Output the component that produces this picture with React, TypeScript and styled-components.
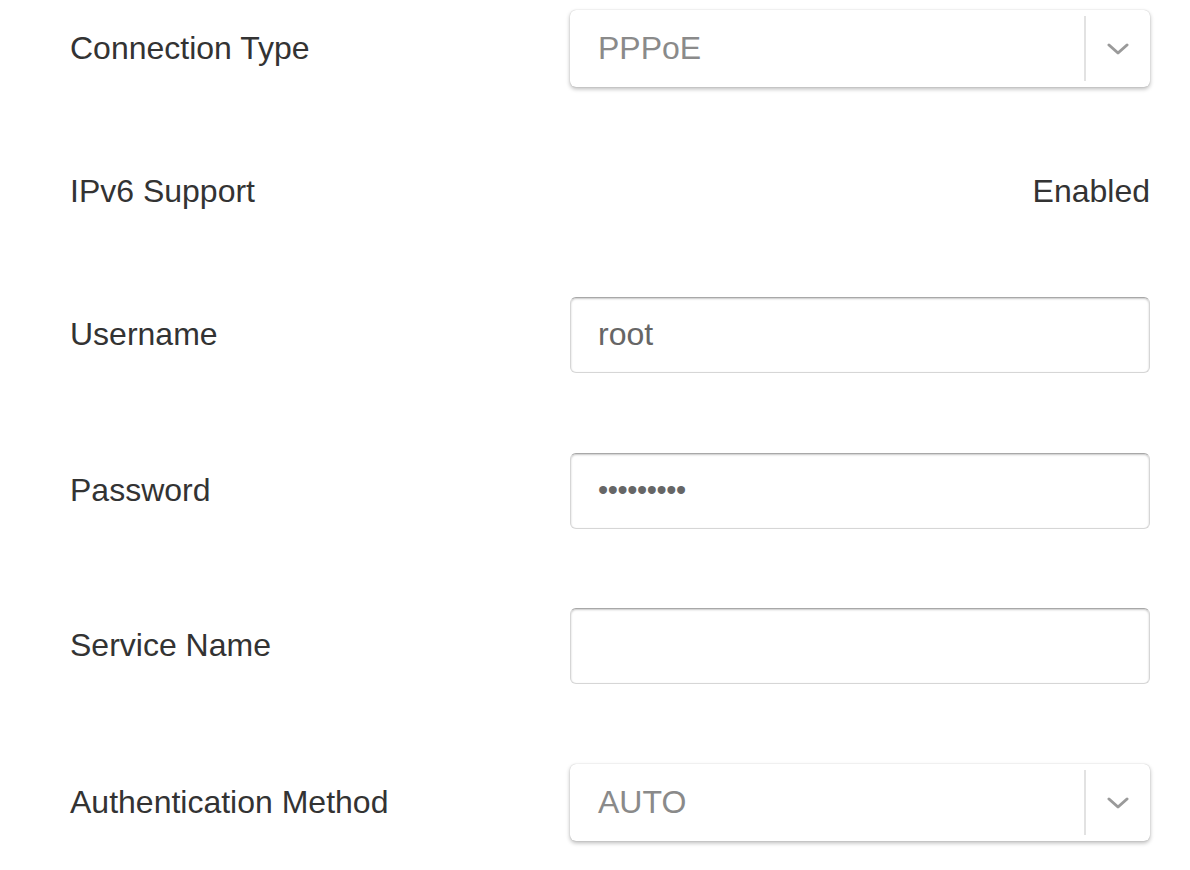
import React from "react";
import styled, { createGlobalStyle } from "styled-components";

const GlobalStyle = createGlobalStyle`
  body {
    margin: 0;
    background: #ffffff;
    font-family: "Liberation Sans", Arial, Helvetica, sans-serif;
  }
`;

const Form = styled.div`
  display: flex;
  flex-direction: column;
  padding: 0 40px 28px 70px;
  width: 1190px;
  box-sizing: border-box;
`;

const Row = styled.div<{ $top: number }>`
  display: flex;
  align-items: center;
  justify-content: space-between;
  height: 77px;
  margin-top: ${(p) => p.$top}px;
`;

const Label = styled.label`
  font-size: 32px;
  color: #333333;
`;

const Control = styled.div`
  width: 580px;
  display: flex;
  justify-content: flex-end;
`;

const StaticValue = styled.span`
  font-size: 32px;
  color: #333333;
`;

const SelectBox = styled.div`
  display: flex;
  align-items: center;
  width: 100%;
  height: 77px;
  box-sizing: border-box;
  background: #ffffff;
  border-radius: 6px;
  box-shadow: 0 2px 4px rgba(0, 0, 0, 0.28), 0 0 1px rgba(0, 0, 0, 0.25);
`;

const SelectValue = styled.span`
  flex: 1;
  padding-left: 28px;
  font-size: 32px;
  color: #8a8a8a;
`;

const Indicator = styled.div`
  display: flex;
  align-items: center;
  justify-content: center;
  width: 66px;
  height: 65px;
  border-left: 2px solid #e2e2e2;
  box-sizing: border-box;
`;

const TextInput = styled.input`
  width: 100%;
  height: 76px;
  box-sizing: border-box;
  padding: 0 27px;
  border: 1px solid #d6d6d6;
  border-top-color: #a8a8a8;
  border-radius: 6px;
  box-shadow: inset 0 1px 2px rgba(0, 0, 0, 0.22);
  font-family: "Liberation Sans", Arial, Helvetica, sans-serif;
  font-size: 32px;
  color: #666666;
  background: #ffffff;
  outline: none;
`;

const PasswordInput = styled(TextInput)`
  font-size: 29px;
  letter-spacing: -0.4px;
`;

const Chevron = () => (
  <svg width="22" height="12" viewBox="0 0 22 12">
    <polyline
      points="2,2 11,10 20,2"
      fill="none"
      stroke="#9a9a9a"
      strokeWidth="3"
      strokeLinecap="round"
      strokeLinejoin="round"
    />
  </svg>
);

const Select: React.FC<{ value: string }> = ({ value }) => (
  <SelectBox>
    <SelectValue>{value}</SelectValue>
    <Indicator>
      <Chevron />
    </Indicator>
  </SelectBox>
);

const App: React.FC = () => {
  return (
    <>
      <GlobalStyle />
      <Form>
        <Row $top={10}>
          <Label>Connection Type</Label>
          <Control>
            <Select value="PPPoE" />
          </Control>
        </Row>
        <Row $top={66}>
          <Label>IPv6 Support</Label>
          <StaticValue>Enabled</StaticValue>
        </Row>
        <Row $top={66}>
          <Label>Username</Label>
          <Control>
            <TextInput type="text" defaultValue="root" readOnly />
          </Control>
        </Row>
        <Row $top={79}>
          <Label>Password</Label>
          <Control>
            <PasswordInput type="password" defaultValue="123456789" readOnly />
          </Control>
        </Row>
        <Row $top={78}>
          <Label>Service Name</Label>
          <Control>
            <TextInput type="text" defaultValue="" readOnly />
          </Control>
        </Row>
        <Row $top={80}>
          <Label>Authentication Method</Label>
          <Control>
            <Select value="AUTO" />
          </Control>
        </Row>
      </Form>
    </>
  );
};

export default App;
